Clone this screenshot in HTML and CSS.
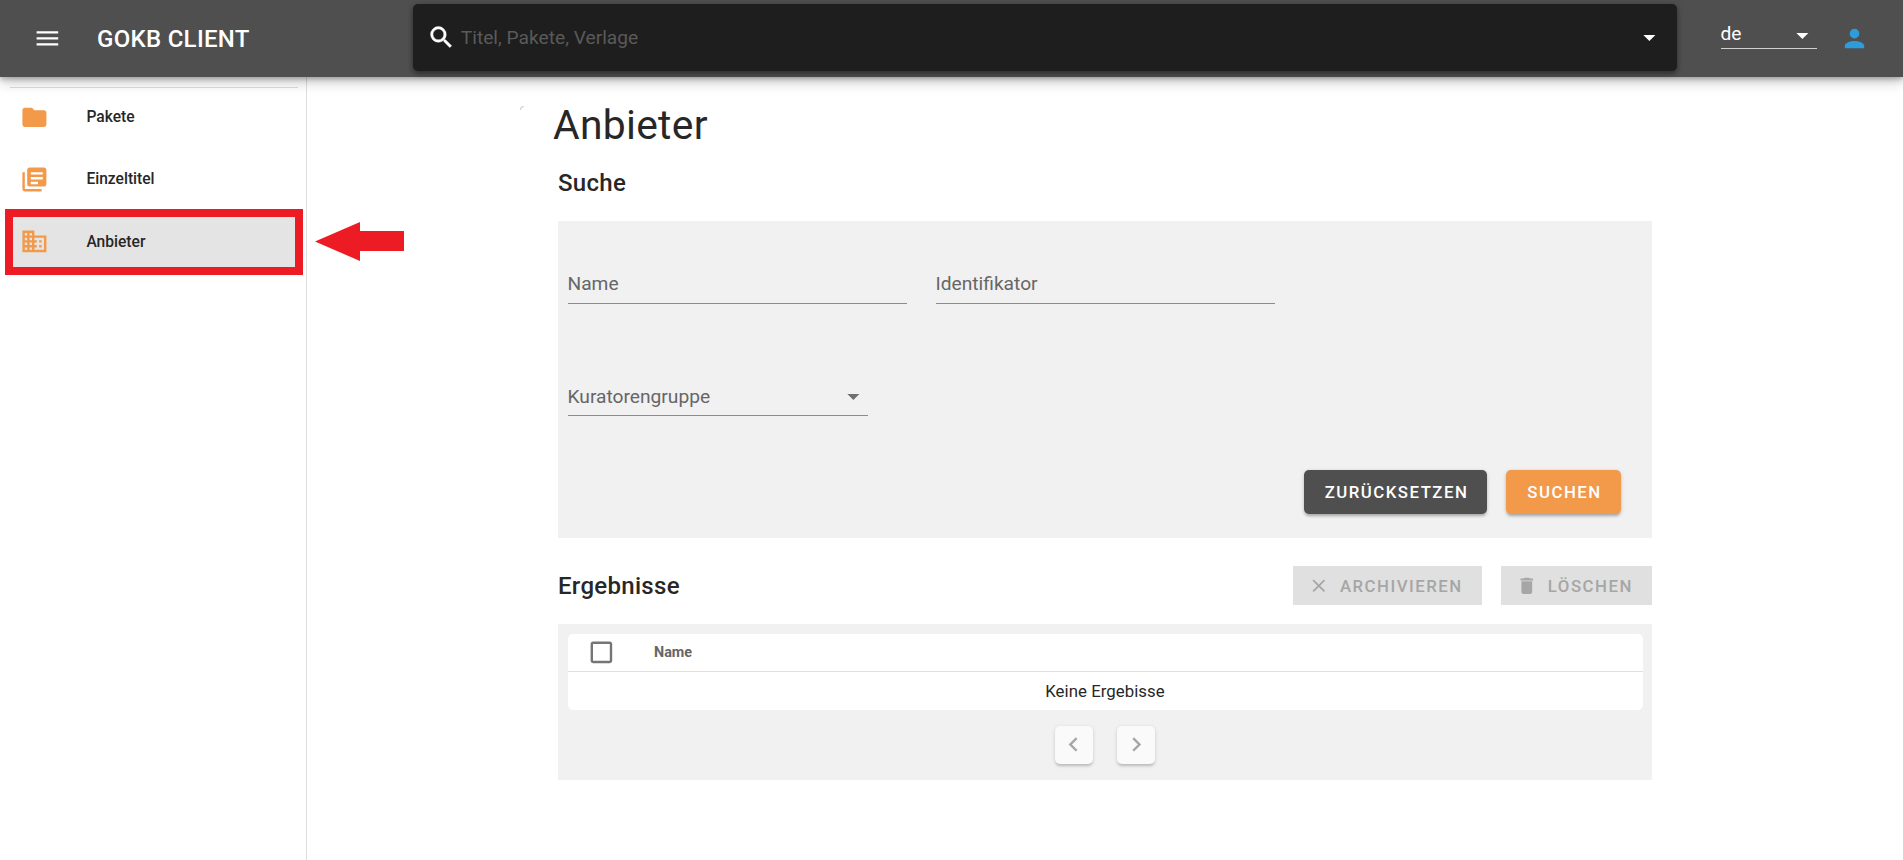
FILE: index.html
```html
<!DOCTYPE html>
<html lang="de">
<head>
<meta charset="utf-8">
<title>GOKB Client</title>
<link rel="stylesheet" href="styles.css">
</head>
<body>
<header class="bar">
  <svg class="menu" viewBox="0 0 24 24"><path d="M3,6H21V8H3V6M3,11H21V13H3V11M3,16H21V18H3V16Z"/></svg>
  <div class="brand">GOKB CLIENT</div>
  <div class="search">
    <svg class="icon glass" viewBox="0 0 24 24"><path d="M9.5,3A6.5,6.5 0 0,1 16,9.5C16,11.11 15.41,12.59 14.44,13.73L14.71,14H15.5L20.5,19L19,20.5L14,15.5V14.71L13.73,14.44C12.59,15.41 11.11,16 9.5,16A6.5,6.5 0 0,1 3,9.5A6.5,6.5 0 0,1 9.5,3M9.5,5C7,5 5,7 5,9.5C5,12 7,14 9.5,14C12,14 14,12 14,9.5C14,7 12,5 9.5,5Z"/></svg>
    <span class="hint">Titel, Pakete, Verlage</span>
    <svg class="icon" viewBox="0 0 24 24"><path d="M7,10L12,15L17,10H7Z"/></svg>
  </div>
  <div class="lang"><span>de</span><svg class="icon" viewBox="0 0 24 24"><path d="M7,10L12,15L17,10H7Z"/></svg></div>
  <svg class="user" viewBox="0 0 24 24"><path d="M12,4A4,4 0 0,1 16,8A4,4 0 0,1 12,12A4,4 0 0,1 8,8A4,4 0 0,1 12,4M12,14C16.42,14 20,15.79 20,18V20H4V18C4,15.79 7.58,14 12,14Z"/></svg>
</header>
<div class="body">
  <nav class="side">
    <div class="rule"></div>
    <a class="item"><svg class="icon" viewBox="0 0 24 24"><path d="M10,4H4C2.89,4 2,4.89 2,6V18A2,2 0 0,0 4,20H20A2,2 0 0,0 22,18V8C22,6.89 21.1,6 20,6H12L10,4Z"/></svg><span>Pakete</span></a>
    <a class="item"><svg class="icon" viewBox="0 0 24 24"><path d="M19,7H9V5H19M15,15H9V13H15M19,11H9V9H19M20,1H8C6.9,1 6,1.9 6,3V15A2,2 0 0,0 8,17H20A2,2 0 0,0 22,15V3C22,1.9 21.1,1 20,1M4,5H2V19A2,2 0 0,0 4,21H18V19H4V5Z" transform="translate(0 1)"/></svg><span>Einzeltitel</span></a>
    <a class="item active"><svg class="icon" viewBox="0 0 24 24"><path d="M18,15H16V17H18M18,11H16V13H18M20,19H12V17H14V15H12V13H14V11H12V9H20M10,7H8V5H10M10,11H8V9H10M10,15H8V13H10M10,19H8V17H10M6,7H4V5H6M6,11H4V9H6M6,15H4V13H6M6,19H4V17H6M12,7V3H2V21H22V7H12Z"/></svg><span>Anbieter</span>
      <svg class="arrow" viewBox="0 0 89 39"><path d="M0 19.5L45 0V9H89V29H45V39Z"/></svg>
    </a>
  </nav>
  <main class="main">
    <i class="corner"></i>
    <h1>Anbieter</h1>
    <h2 class="head">Suche</h2>
    <section class="panel form">
      <div class="row">
        <label class="field">Name</label>
        <label class="field">Identifikator</label>
      </div>
      <label class="field select"><span>Kuratorengruppe</span><svg class="icon" viewBox="0 0 24 24"><path d="M7,10L12,15L17,10H7Z"/></svg></label>
      <div class="actions">
        <button class="btn dark">ZURÜCKSETZEN</button>
        <button class="btn orange">SUCHEN</button>
      </div>
    </section>
    <div class="results-head">
      <h2>Ergebnisse</h2>
      <button class="btn off archive"><svg viewBox="0 0 24 24"><path d="M19,6.41L17.59,5L12,10.59L6.41,5L5,6.41L10.59,12L5,17.59L6.41,19L12,13.41L17.59,19L19,17.59L13.41,12L19,6.41Z"/></svg>ARCHIVIEREN</button>
      <button class="btn off delete"><svg viewBox="0 0 24 24"><path d="M19,4H15.5L14.5,3H9.5L8.5,4H5V6H19M6,19A2,2 0 0,0 8,21H16A2,2 0 0,0 18,19V7H6V19Z"/></svg>LÖSCHEN</button>
    </div>
    <section class="panel results">
      <div class="table">
        <div class="thead"><svg class="icon" viewBox="0 0 24 24"><path d="M19,3H5C3.89,3 3,3.89 3,5V19A2,2 0 0,0 5,21H19A2,2 0 0,0 21,19V5C21,3.89 20.1,3 19,3M19,5V19H5V5H19Z"/></svg><span>Name</span></div>
        <div class="empty">Keine Ergebisse</div>
      </div>
      <div class="pager">
        <button class="page"><svg viewBox="0 0 24 24"><path d="M15.41,16.58L10.83,12L15.41,7.41L14,6L8,12L14,18L15.41,16.58Z"/></svg></button>
        <button class="page"><svg viewBox="0 0 24 24"><path d="M8.59,16.58L13.17,12L8.59,7.41L10,6L16,12L10,18L8.59,16.58Z"/></svg></button>
      </div>
    </section>
  </main>
</div>
</body>
</html>
```
FILE: styles.css
```css
* { box-sizing: border-box; }
body { margin: 0; height: 860px; overflow: hidden; background: #fff; color: #272727; font-family: Roboto, sans-serif; font-size: 19.2px; }
svg { fill: currentColor; display: block; flex: none; }
h1, h2 { margin: 0; }
button { font: inherit; border: 0; padding: 0; }
.icon { width: 28.8px; height: 28.8px; }

.bar { position: relative; z-index: 2; height: 77px; display: flex; align-items: flex-start; background: #4f4f4f; color: #fff; box-shadow: 0 2px 5px rgba(0,0,0,.25), 0 5px 12px rgba(0,0,0,.22); }
.menu { width: 28.8px; height: 28.8px; margin: 24px 0 0 33.2px; }
.brand { width: 316px; margin-left: 35px; font-size: 24px; line-height: 30px; padding-top: 24px; font-weight: 500; letter-spacing: .3px; }
.search { width: 1264px; height: 67px; margin-top: 4px; padding: 0 13.4px 0 14px; display: flex; align-items: center; border-radius: 5px; background: #1e1e1e; box-shadow: 0 3px 5px rgba(0,0,0,.3), 0 1px 6px rgba(0,0,0,.2); }
.glass { stroke: currentColor; stroke-width: .4; }
.hint { flex: 1; margin-left: 5px; color: #5a5a5a; }
.lang { width: 96px; height: 36px; margin: 13px 0 0 44px; display: flex; justify-content: space-between; align-items: center; border-bottom: 1px solid #d0d0d0; }
.lang span { margin: 6px 0 0 -.5px; }
.lang .icon { margin: 10px 0 0; }
.user { width: 29px; height: 29px; margin: 24px 0 0 23.4px; color: #2d9cdb; }

.body { display: flex; height: 783px; }
.side { width: 307px; border-right: 1px solid #dedede; padding-top: 10px; }
.rule { height: 1px; margin: 0 8px 5px 10px; background: #dcdcdc; }
.item { position: relative; display: flex; align-items: center; height: 48px; margin-bottom: 14.4px; padding-left: 19.6px; gap: 38px; font-size: 15.6px; font-weight: 500; margin-right: 3px; }
.item .icon { color: #f2994a; }
.item.active { height: 66px; margin: -9px 3px 0 5px; padding-left: 6.6px; border: 8px solid #ed1c24; background: #e4e4e4; }
.arrow { position: absolute; left: 302px; top: 5px; width: 89px; height: 39px; color: #ed1c24; }

.main { position: relative; width: 1346px; padding-left: 251px; }
.corner { position: absolute; left: 213px; top: 29px; width: 4px; height: 4px; border: solid #ccc; border-width: 1px 0 0 1px; border-radius: 4px 0 0; }
h1 { margin: 24px 0 0 -5px; font-size: 40.8px; line-height: 48px; font-weight: 400; letter-spacing: .3px; }
h2 { font-size: 24px; line-height: 38px; font-weight: 500; letter-spacing: .3px; }
.head { margin-top: 15px; }
.panel { width: 1094px; background: #f1f1f1; }
.form { height: 317px; margin-top: 19px; padding: 44px 31px 0 10px; }
.row { display: flex; gap: 29px; }
.field { display: block; width: 339px; height: 39px; line-height: 38px; border-bottom: 1px solid #8c8c8c; color: #666; text-indent: -.5px; }
.select { display: flex; justify-content: space-between; align-items: center; width: 300px; margin-top: 73px; }
.select span { padding-top: 2px; }
.select .icon { color: #6f6f6f; }
.actions { display: flex; justify-content: flex-end; gap: 19px; margin-top: 54px; }
.btn { display: flex; align-items: center; justify-content: center; height: 44px; font-size: 16.8px; font-weight: 500; letter-spacing: 1.5px; color: #fff; border-radius: 5px; box-shadow: 0 3px 3px -1px rgba(0,0,0,.22), 0 1px 4px rgba(0,0,0,.16); }
.dark { width: 183px; padding-left: 2px; background: #4f4f4f; }
.orange { width: 115px; padding-left: 2px; background: #f2994a; }
.results-head { display: flex; align-items: center; width: 1094px; height: 39px; margin-top: 28px; }
.results-head h2 { flex: 1; }
.off { height: 39px; border-radius: 0; background: #e0e0e0; color: #a6a6a6; box-shadow: none; }
.off svg { width: 21.6px; height: 21.6px; margin-right: 10px; }
.archive { width: 189px; margin-right: 19px; padding-right: 4px; }
.delete { width: 151px; padding-right: 4px; }
.results { height: 156px; margin-top: 19px; padding: 10px 9px 0 10px; }
.table { height: 76px; background: #fff; border-radius: 5px; }
.thead { display: flex; align-items: center; height: 38px; padding-left: 19.2px; gap: 38px; border-bottom: 1px solid #e0e0e0; font-size: 14.4px; font-weight: 700; color: #666; }
.thead .icon { color: #757575; }
.empty { padding-right: 1px; text-align: center; line-height: 38px; font-size: 16.8px; letter-spacing: .05px; }
.pager { display: flex; justify-content: center; gap: 24px; margin: 16px 1px 0 0; }
.page { display: flex; align-items: center; justify-content: center; width: 38.4px; height: 38.4px; border-radius: 5px; background: #fafafa; color: #a6a6a6; box-shadow: 0 3px 3px -1px rgba(0,0,0,.16), 0 1px 4px rgba(0,0,0,.12); }
.page svg { width: 28.8px; height: 28.8px; margin-top: -1px; }
```
